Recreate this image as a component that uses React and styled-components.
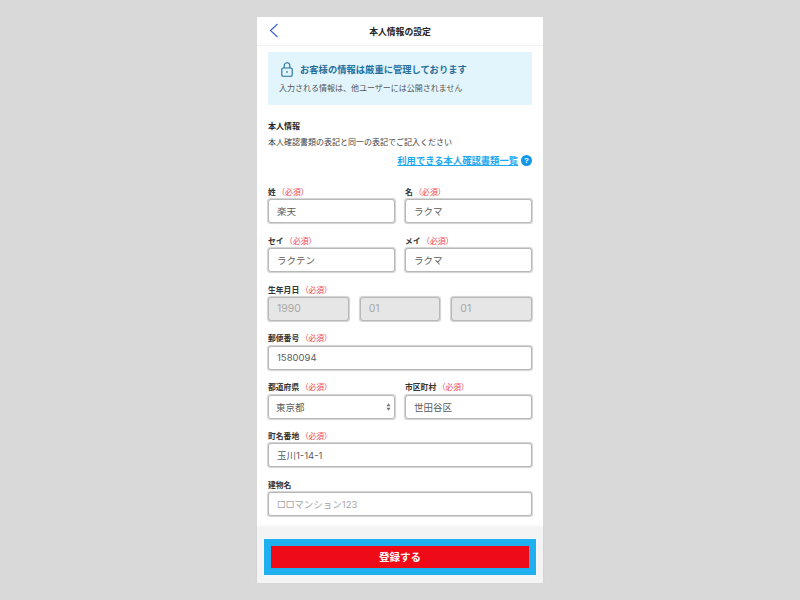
import styled, { createGlobalStyle } from 'styled-components'

const GlobalStyle = createGlobalStyle`
    html, body {
        margin: 0;
        height: 100%;
        background: #d9d9d9;
        font-family: "Liberation Sans", "Noto Sans CJK JP", sans-serif;
    }
    * {
        box-sizing: border-box;
    }
`

const Page = styled.div`
    display: flex;
    justify-content: center;
    height: 600px;
    padding-top: 17px;
    overflow: hidden;
`

const Card = styled.main`
    width: 286px;
    height: 566px;
    display: flex;
    flex-direction: column;
    background: #fff;
`

const Header = styled.header`
    position: relative;
    height: 29px;
    display: flex;
    justify-content: center;
    align-items: center;
    border-bottom: 1px solid #f3f3f3;
    font-size: 8.8px;
    font-weight: 700;
    color: #222;
`

const BackButton = styled.button`
    position: absolute;
    left: 11px;
    top: 5px;
    width: 12px;
    height: 18px;
    padding: 0;
    border: none;
    background: none;
    display: flex;
`

const Body = styled.div`
    flex: 1;
    padding: 6px 11px 0;
`

const Banner = styled.section`
    height: 53px;
    padding: 8px 11px;
    background: #e2f5fc;
`

const BannerTitle = styled.div`
    display: flex;
    align-items: center;
    gap: 7px;
    height: 18px;
    margin-left: 2px;
    font-size: 9.3px;
    font-weight: 700;
    color: #1f6f9f;
`

const BannerText = styled.p`
    margin: 5px 0 0;
    font-size: 8px;
    line-height: 12px;
    color: #555;
`

const SectionTitle = styled.h2`
    margin: 16px 0 0;
    font-size: 8px;
    line-height: 12px;
    font-weight: 700;
    color: #222;
`

const Note = styled.p`
    margin: 4px 0 0;
    font-size: 8px;
    line-height: 12px;
    color: #444;
`

const HelpRow = styled.div`
    display: flex;
    justify-content: flex-end;
    align-items: center;
    gap: 3px;
    margin-top: 4px;
    height: 14px;
`

const HelpLink = styled.a`
    font-size: 9.3px;
    font-weight: 700;
    color: #1ca8f0;
    text-decoration: underline;
`

const HelpBadge = styled.span`
    width: 11px;
    height: 11px;
    border-radius: 50%;
    display: flex;
    align-items: center;
    justify-content: center;
    background: #1296e6;
    color: #fff;
    font-size: 8px;
    font-weight: 700;
`

const Form = styled.form`
    display: flex;
    flex-direction: column;
    gap: 12.4px;
    margin-top: 20px;
`

const Row = styled.div`
    display: grid;
    grid-template-columns: repeat(${(p) => p.$cols}, 1fr);
    column-gap: ${(p) => (p.$cols === 3 ? 11 : 10)}px;
`

const Field = styled.div`
    display: flex;
    flex-direction: column;
    min-width: 0;
`

const Label = styled.label`
    height: 12.4px;
    font-size: 7.8px;
    line-height: 12px;
    font-weight: 700;
    color: #333;
`

const Required = styled.span`
    margin-left: 1.5px;
    font-weight: 400;
    color: #f0434e;
`

const Input = styled.input`
    width: 100%;
    height: 24px;
    padding: 0 8px;
    border: 1px solid #b8b8b8;
    border-radius: 3px;
    box-shadow: 0 0 1px 0.5px #d2d2d2;
    background: ${(p) => (p.disabled ? '#e6e6e6' : '#fff')};
    font-family: Inter, "Noto Sans CJK JP", sans-serif;
    font-size: 9.5px;
    color: #5c5c5c;
    opacity: 1;

    &:disabled {
        font-size: 10.5px;
        color: #a8a8a8;
        -webkit-text-fill-color: #a8a8a8;
    }

    &::placeholder {
        color: #a6a6a6;
    }
`

const SelectBox = styled.div`
    position: relative;
    height: 24px;
    display: flex;
    align-items: center;
    padding: 0 7px;
    border: 1px solid #b8b8b8;
    border-radius: 3px;
    box-shadow: 0 0 1px 0.5px #d2d2d2;
    font-family: Inter, "Noto Sans CJK JP", sans-serif;
    font-size: 9.5px;
    color: #5c5c5c;
`

const SelectArrows = styled.svg`
    position: absolute;
    right: 3px;
    top: 6px;
    width: 5px;
    height: 10px;
    fill: #777;
`

const Footer = styled.footer`
    height: 56px;
    padding: 12px 7px 0;
    background: #f4f4f4;
    box-shadow: 0 -1px 3px rgba(0, 0, 0, 0.06);
`

const SubmitButton = styled.button`
    width: 100%;
    height: 36px;
    padding: 0 0 1px;
    border: 7px solid #20b0f0;
    background: #ee0a17;
    color: #fff;
    font-family: inherit;
    font-size: 10.5px;
    font-weight: 700;
`

function Req() {
    return <Required>（必須）</Required>
}

function App() {
    return (
        <Page>
            <GlobalStyle />
            <Card>
                <Header>
                    <BackButton aria-label="戻る">
                        <svg width="12" height="18" viewBox="0 0 12 18" fill="none" stroke="#3d62d0" strokeWidth="1.2">
                            <path d="M9.5 2 L2.5 8.5 L9.5 15" />
                        </svg>
                    </BackButton>
                    本人情報の設定
                </Header>
                <Body>
                    <Banner>
                        <BannerTitle>
                            <svg width="12" height="15" viewBox="0 0 12 15" fill="none" stroke="#1f6f9f" strokeWidth="1.1">
                                <rect x="0.8" y="6" width="10.4" height="8.2" rx="1.3" />
                                <path d="M3.2 6 V3.6 a2.8 2.8 0 0 1 5.6 0 V6" />
                                <path d="M6 9 V11" />
                            </svg>
                            お客様の情報は厳重に管理しております
                        </BannerTitle>
                        <BannerText>入力される情報は、他ユーザーには公開されません</BannerText>
                    </Banner>
                    <SectionTitle>本人情報</SectionTitle>
                    <Note>本人確認書類の表記と同一の表記でご記入ください</Note>
                    <HelpRow>
                        <HelpLink>利用できる本人確認書類一覧</HelpLink>
                        <HelpBadge>?</HelpBadge>
                    </HelpRow>
                    <Form>
                        <Row $cols={2}>
                            <Field>
                                <Label>姓<Req /></Label>
                                <Input defaultValue="楽天" />
                            </Field>
                            <Field>
                                <Label>名<Req /></Label>
                                <Input defaultValue="ラクマ" />
                            </Field>
                        </Row>
                        <Row $cols={2}>
                            <Field>
                                <Label>セイ<Req /></Label>
                                <Input defaultValue="ラクテン" />
                            </Field>
                            <Field>
                                <Label>メイ<Req /></Label>
                                <Input defaultValue="ラクマ" />
                            </Field>
                        </Row>
                        <Field>
                            <Label>生年月日<Req /></Label>
                            <Row $cols={3}>
                                <Input disabled defaultValue="1990" />
                                <Input disabled defaultValue="01" />
                                <Input disabled defaultValue="01" />
                            </Row>
                        </Field>
                        <Field>
                            <Label>郵便番号<Req /></Label>
                            <Input defaultValue="1580094" />
                        </Field>
                        <Row $cols={2}>
                            <Field>
                                <Label>都道府県<Req /></Label>
                                <SelectBox>
                                    東京都
                                    <SelectArrows viewBox="0 0 6 10">
                                        <path d="M3 0.5 L5.5 4 H0.5 Z M3 9.5 L5.5 6 H0.5 Z" />
                                    </SelectArrows>
                                </SelectBox>
                            </Field>
                            <Field>
                                <Label>市区町村<Req /></Label>
                                <Input defaultValue="世田谷区" />
                            </Field>
                        </Row>
                        <Field>
                            <Label>町名番地<Req /></Label>
                            <Input defaultValue="玉川1-14-1" />
                        </Field>
                        <Field>
                            <Label>建物名</Label>
                            <Input placeholder="□□マンション123" />
                        </Field>
                    </Form>
                </Body>
                <Footer>
                    <SubmitButton type="button">登録する</SubmitButton>
                </Footer>
            </Card>
        </Page>
    )
}

export default App
